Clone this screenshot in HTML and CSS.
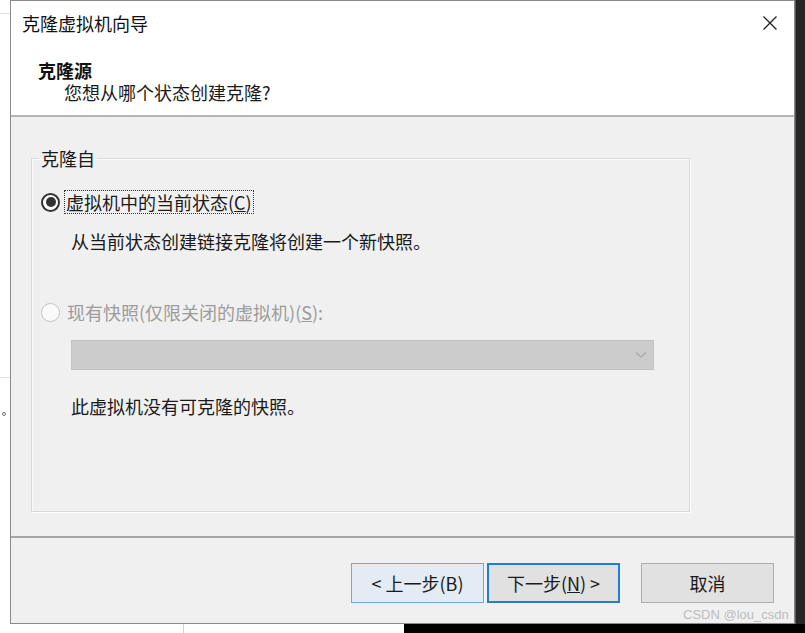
FILE: index.html
```html
<!DOCTYPE html>
<html lang="zh-CN">
<head>
<meta charset="utf-8">
<title>克隆虚拟机向导</title>
<link rel="stylesheet" href="styles.css">
</head>
<body>
<div class="screen">
  <div class="side-left">
    <div class="ghost-line first"></div>
    <div class="ghost-line second"></div>
    <div class="ghost-dot"></div>
  </div>

  <div class="dialog">
    <div class="header">
      <div class="titlebar">
        <span class="title">克隆虚拟机向导</span>
        <svg class="close" width="16" height="16" viewBox="0 0 16 16" aria-hidden="true">
          <path d="M1.5 1.5 L14.5 14.5 M14.5 1.5 L1.5 14.5" stroke="#1e1e1e" stroke-width="1.3" fill="none"/>
        </svg>
      </div>
      <div class="heading">克隆源</div>
      <div class="subheading">您想从哪个状态创建克隆?</div>
    </div>

    <div class="body">
      <fieldset class="group">
        <legend class="group-title">克隆自</legend>
        <div class="option first-option">
          <span class="radio checked"><span class="dot"></span></span>
          <span class="label focus">虚拟机中的当前状态(<u>C</u>)</span>
        </div>
        <div class="desc desc-current">从当前状态创建链接克隆将创建一个新快照。</div>
        <div class="option disabled second-option">
          <span class="radio"></span>
          <span class="label">现有快照(仅限关闭的虚拟机)(<u>S</u>):</span>
        </div>
        <div class="combo">
          <svg class="chevron" width="12" height="8" viewBox="0 0 12 8" aria-hidden="true">
            <path d="M1 1.5 L6 6 L11 1.5" stroke="#a8a8a8" stroke-width="1.2" fill="none"/>
          </svg>
        </div>
        <div class="desc desc-note">此虚拟机没有可克隆的快照。</div>
      </fieldset>
    </div>

    <div class="footer">
      <button class="btn btn-hover">&lt; 上一步(B)</button>
      <button class="btn btn-default">下一步(<u>N</u>) &gt;</button>
      <button class="btn btn-cancel">取消</button>
    </div>
  </div>

  <div class="side-right"></div>

  <div class="bottom-strip">
    <div class="strip-white a"></div>
    <div class="strip-line"></div>
    <div class="strip-white b"></div>
    <div class="strip-black"></div>
  </div>

  <div class="watermark">CSDN @lou_csdn</div>
</div>
</body>
</html>
```

FILE: styles.css
```css
* { box-sizing: border-box; }

html, body {
  margin: 0;
  padding: 0;
  background: #ffffff;
}

body {
  font-family: "Noto Sans CJK SC", "Noto Sans", sans-serif;
  font-size: 18px;
  color: #1a1a1a;
}

.screen {
  position: relative;
  width: 805px;
  height: 633px;
  overflow: hidden;
  display: grid;
  grid-template-columns: 10px 785px 10px;
  grid-template-rows: 624px 9px;
}

/* left strip (window behind) */
.side-left {
  background: #ffffff;
  display: flex;
  flex-direction: column;
}
.ghost-line {
  height: 1px;
  background: #e2e2e2;
}
.ghost-line.first { margin-top: 13px; }
.ghost-line.second { margin-top: 363px; }
.ghost-dot {
  margin-top: 34px;
  margin-left: 2px;
  width: 4px;
  height: 4px;
  border: 1px solid #777;
  border-radius: 50%;
}

/* right strip */
.side-right {
  background: #262626;
  border-left: 1px solid #555;
}

/* bottom strip */
.bottom-strip {
  grid-column: 1 / -1;
  display: flex;
}
.strip-white.a { width: 183px; background: #fff; }
.strip-line { width: 1px; background: #d0d0d0; }
.strip-white.b { width: 220px; background: #fff; }
.strip-black { flex: 1; background: #000; }

/* dialog */
.dialog {
  border: 1px solid #8a8a8a;
  background: #f0f0f0;
  display: flex;
  flex-direction: column;
}

.header {
  height: 116px;
  flex: none;
  background: #ffffff;
  border-bottom: 2px solid #b4b4b4;
}

.titlebar {
  height: 43px;
  display: flex;
  align-items: center;
  justify-content: space-between;
  padding-left: 11px;
  padding-right: 16px;
}
.title {
  line-height: 22px;
  color: #111;
}
.close { display: block; }

.heading {
  margin-top: 15px;
  padding-left: 27px;
  line-height: 22px;
  font-weight: bold;
  color: #111;
}
.subheading {
  padding-left: 53px;
  line-height: 22px;
  color: #1a1a1a;
}

.body {
  height: 419px;
  flex: none;
  padding: 30px 104px 24px 20px;
  display: flex;
  flex-direction: column;
}

.group {
  flex: 1;
  margin: 0;
  padding: 0 11px 0 9px;
  border: 1px solid #d9d9d9;
  box-shadow: 1px 1px 0 #fbfbfb, inset 1px 1px 0 #fbfbfb;
  min-width: 0;
}
.group-title {
  padding: 0 2px;
  margin-left: -2px;
  line-height: 22px;
  color: #1a1a1a;
}

.option {
  display: flex;
  align-items: center;
  height: 24px;
}
.first-option { margin-top: 21px; }
.second-option { margin-top: 48px; }

.radio {
  width: 19px;
  height: 19px;
  border-radius: 50%;
  border: 2px solid #333;
  background: #fff;
  display: flex;
  align-items: center;
  justify-content: center;
  flex: none;
}
.radio .dot {
  width: 10px;
  height: 10px;
  border-radius: 50%;
  background: #333;
}
.disabled .radio {
  border: 1px solid #c4c4c4;
  background: #fafafa;
}

.label {
  margin-left: 4px;
  padding: 0 1px;
  line-height: 22px;
  border: 1px solid transparent;
}
.label.focus {
  border: 1px dotted #333;
}
.disabled .label {
  margin-left: 5px;
  color: #9c9c9c;
}

.desc {
  margin-left: 30px;
  line-height: 22px;
  color: #1a1a1a;
}
.desc-current { margin-top: 16px; }
.desc-note { margin-top: 25px; }

.combo {
  margin-top: 16px;
  margin-left: 30px;
  width: 583px;
  height: 30px;
  background: #cccccc;
  border: 1px solid #c4c4c4;
  display: flex;
  align-items: center;
  justify-content: flex-end;
  padding-right: 6px;
}
.chevron { display: block; }

.footer {
  flex: 1;
  border-top: 2px solid #a6a6a6;
  display: flex;
  justify-content: flex-end;
  align-items: flex-start;
  padding: 25px 20px 0 0;
}

.btn {
  width: 133px;
  height: 40px;
  font-family: "Noto Sans CJK SC", "Noto Sans", sans-serif;
  font-size: 18px;
  color: #1a1a1a;
  background: #e1e1e1;
  border: 1px solid #adadad;
  padding: 0;
  margin: 0;
  line-height: 22px;
}
.btn-hover {
  background: #e3ebf4;
  border: 1px solid #7aa6d6;
}
.btn-default {
  margin-left: 3px;
  border: 2px solid #1f7fd6;
}
.btn-cancel {
  margin-left: 21px;
}

.watermark {
  position: absolute;
  left: 683px;
  top: 607px;
  font-family: "Liberation Sans", sans-serif;
  font-size: 13px;
  line-height: 16px;
  color: #bdbdbd;
}
```
